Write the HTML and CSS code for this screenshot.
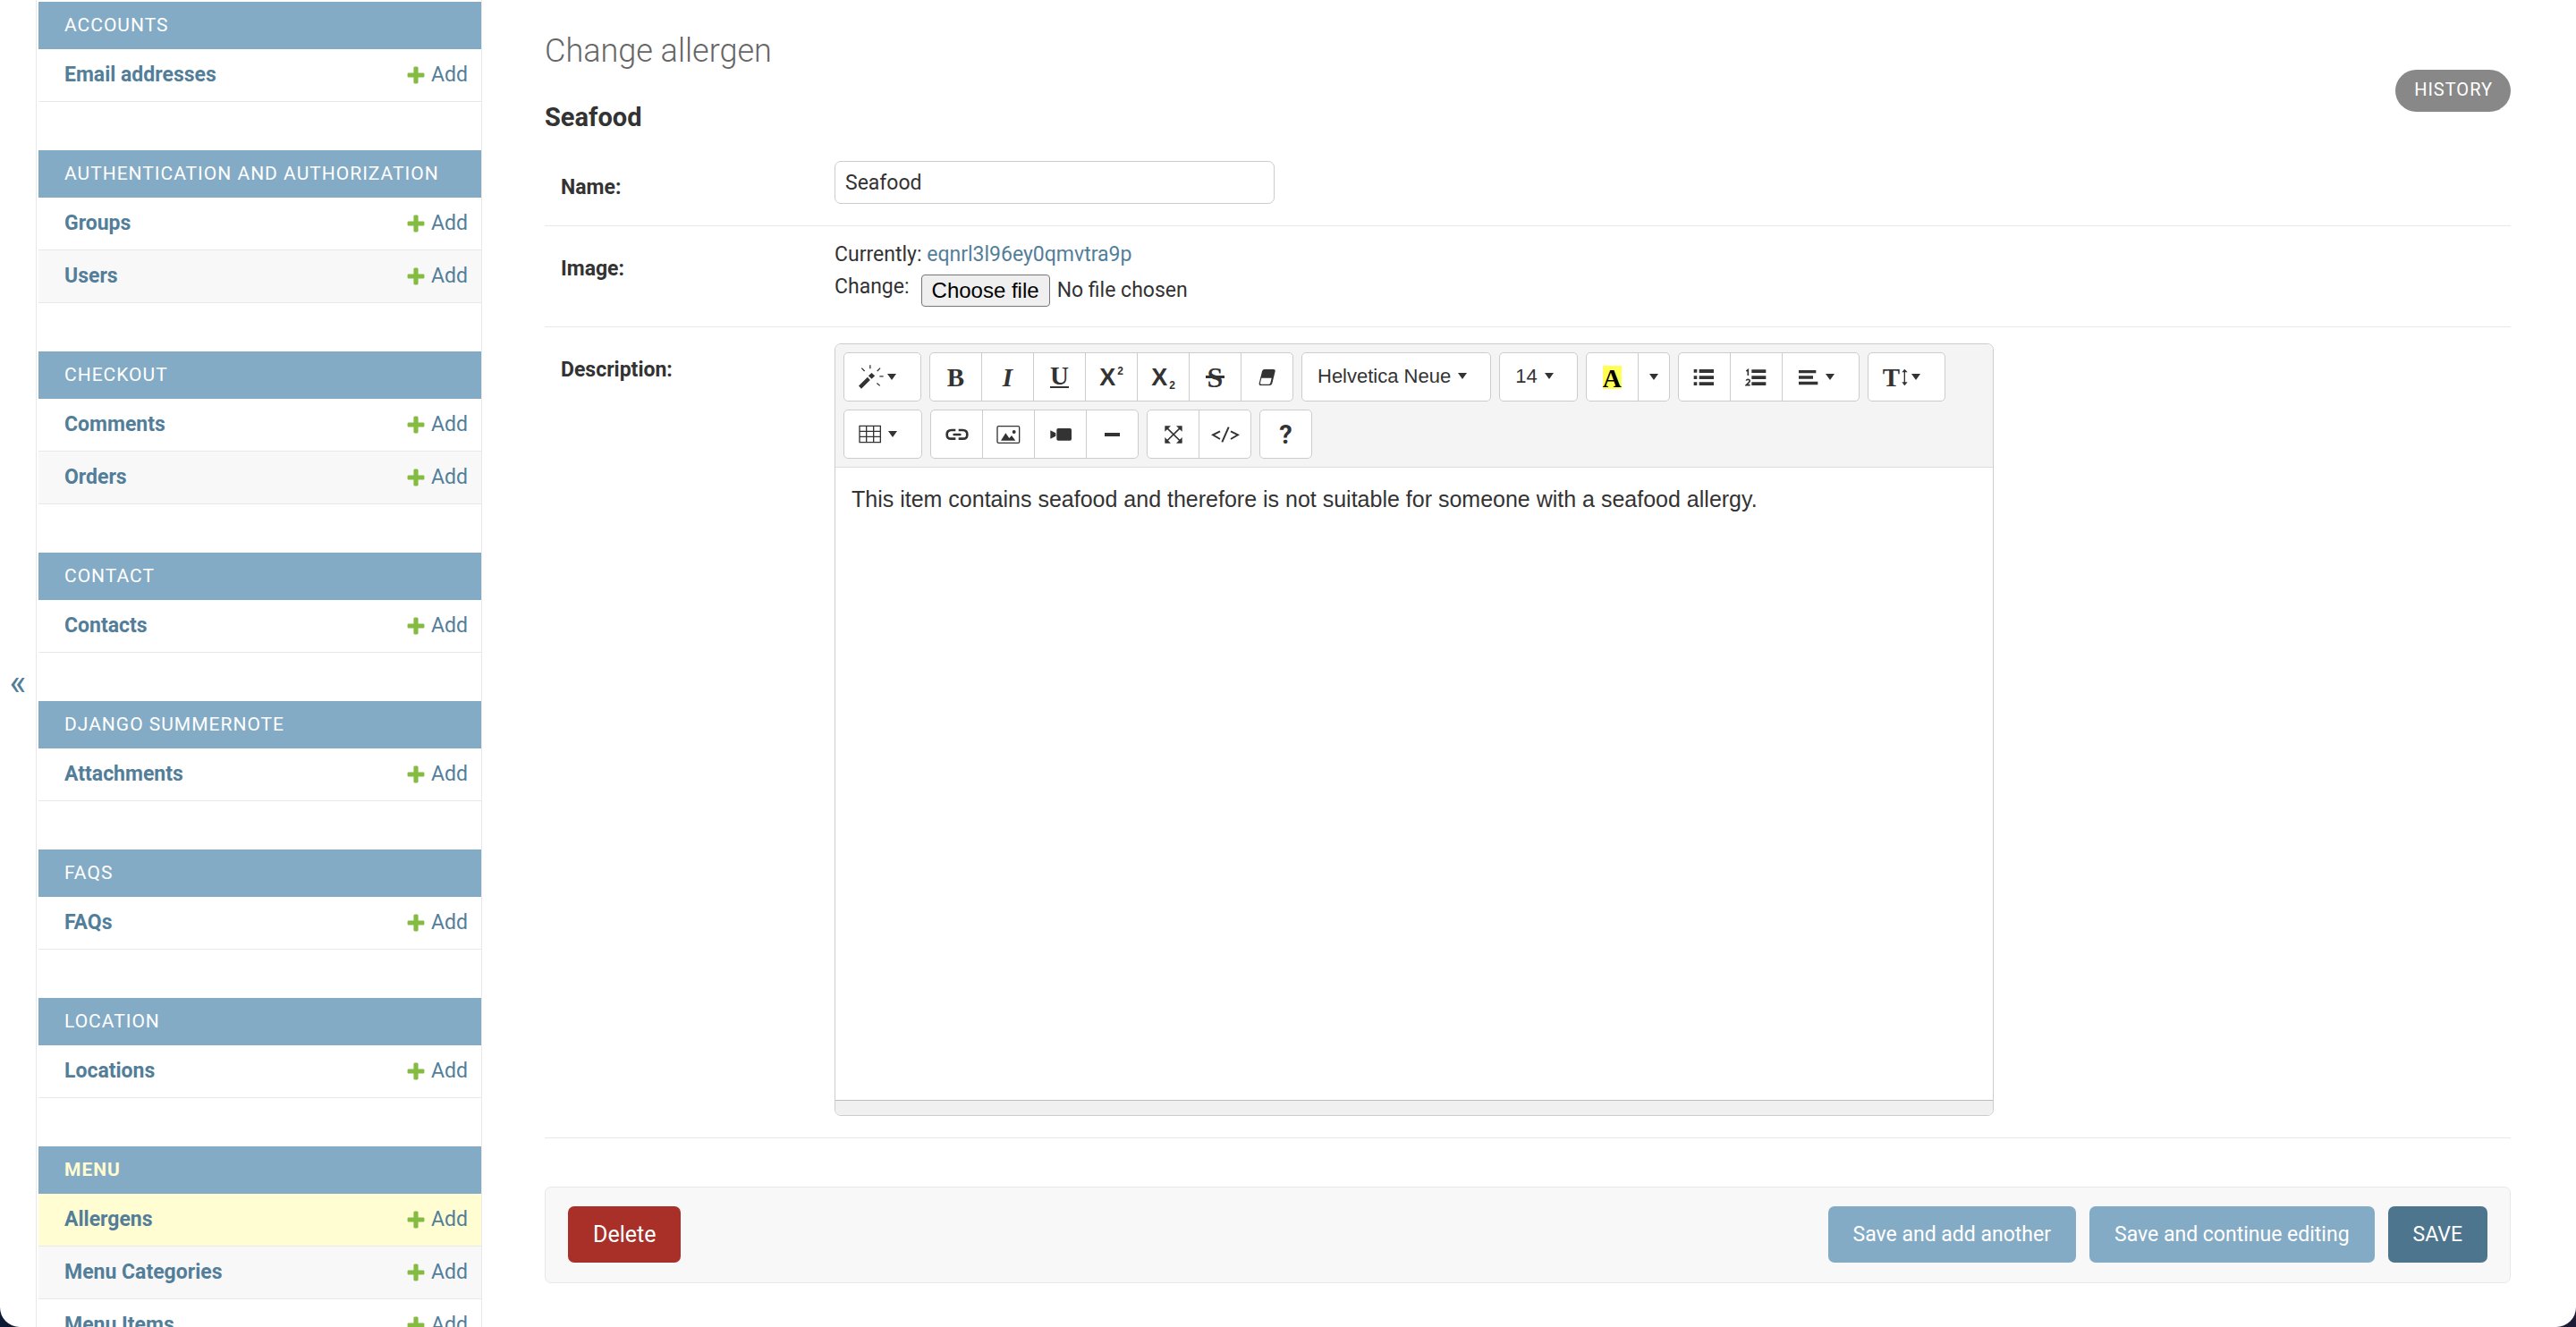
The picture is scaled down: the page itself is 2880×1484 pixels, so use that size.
FILE: index.html
```html
<!DOCTYPE html>
<html lang="en">
<head>
<meta charset="utf-8">
<meta name="viewport" content="width=device-width, initial-scale=1">
<title>Change allergen | Django site admin</title>
<link rel="stylesheet" href="styles.css">
</head>
<body>
<svg class="sprite" aria-hidden="true">
  <symbol id="plus" viewBox="0 0 1792 1792"><path d="M1600 796v192q0 40-28 68t-68 28h-416v416q0 40-28 68t-68 28h-192q-40 0-68-28t-28-68v-416h-416q-40 0-68-28t-28-68v-192q0-40 28-68t68-28h416v-416q0-40 28-68t68-28h192q40 0 68 28t28 68v416h416q40 0 68 28t28 68z"/></symbol>
  <symbol id="caret" viewBox="0 0 30 21"><path d="M0 0h30L15 21z"/></symbol>
</svg>
<div class="shell">
  <button class="toggle" type="button" aria-label="Toggle navigation">«</button>

  <nav class="sidebar" aria-label="Sidebar">
    <table class="app">
      <caption><a href="#">Accounts</a></caption>
      <tr><th scope="row"><a href="#">Email addresses</a></th><td><a class="add" href="#"><svg><use href="#plus"/></svg>Add</a></td></tr>
    </table>
    <table class="app">
      <caption><a href="#">Authentication and Authorization</a></caption>
      <tr><th scope="row"><a href="#">Groups</a></th><td><a class="add" href="#"><svg><use href="#plus"/></svg>Add</a></td></tr>
      <tr><th scope="row"><a href="#">Users</a></th><td><a class="add" href="#"><svg><use href="#plus"/></svg>Add</a></td></tr>
    </table>
    <table class="app">
      <caption><a href="#">Checkout</a></caption>
      <tr><th scope="row"><a href="#">Comments</a></th><td><a class="add" href="#"><svg><use href="#plus"/></svg>Add</a></td></tr>
      <tr><th scope="row"><a href="#">Orders</a></th><td><a class="add" href="#"><svg><use href="#plus"/></svg>Add</a></td></tr>
    </table>
    <table class="app">
      <caption><a href="#">Contact</a></caption>
      <tr><th scope="row"><a href="#">Contacts</a></th><td><a class="add" href="#"><svg><use href="#plus"/></svg>Add</a></td></tr>
    </table>
    <table class="app">
      <caption><a href="#">Django Summernote</a></caption>
      <tr><th scope="row"><a href="#">Attachments</a></th><td><a class="add" href="#"><svg><use href="#plus"/></svg>Add</a></td></tr>
    </table>
    <table class="app">
      <caption><a href="#">FAQs</a></caption>
      <tr><th scope="row"><a href="#">FAQs</a></th><td><a class="add" href="#"><svg><use href="#plus"/></svg>Add</a></td></tr>
    </table>
    <table class="app">
      <caption><a href="#">Location</a></caption>
      <tr><th scope="row"><a href="#">Locations</a></th><td><a class="add" href="#"><svg><use href="#plus"/></svg>Add</a></td></tr>
    </table>
    <table class="app app--current">
      <caption><a href="#">Menu</a></caption>
      <tr class="current"><th scope="row"><a href="#">Allergens</a></th><td><a class="add" href="#"><svg><use href="#plus"/></svg>Add</a></td></tr>
      <tr><th scope="row"><a href="#">Menu Categories</a></th><td><a class="add" href="#"><svg><use href="#plus"/></svg>Add</a></td></tr>
      <tr><th scope="row"><a href="#">Menu Items</a></th><td><a class="add" href="#"><svg><use href="#plus"/></svg>Add</a></td></tr>
    </table>
  </nav>

  <main class="content">
    <header class="heading">
      <div>
        <h1>Change allergen</h1>
        <h2>Seafood</h2>
      </div>
      <a class="history" href="#">History</a>
    </header>

    <form>
      <div class="row">
        <label class="row-label" for="name">Name:</label>
        <div><input class="text-input" id="name" type="text" value="Seafood"></div>
      </div>

      <div class="row">
        <label class="row-label" for="image">Image:</label>
        <div class="upload">
          <p>Currently: <a href="#">eqnrl3l96ey0qmvtra9p</a></p>
          <div class="upload-change">
            <span>Change:</span>
            <input class="file-input" id="image" type="file">
            <label class="file-button" for="image">Choose file</label>
            <span class="file-name">No file chosen</span>
          </div>
        </div>
      </div>

      <div class="row">
        <span class="row-label" id="description-label">Description:</span>
        <div>
        <div class="editor">
          <div class="toolbar" role="toolbar" aria-label="Formatting">
            <div class="group">
              <button class="tool tool--menu gap-s" type="button" aria-label="Style">
                <svg width="28" height="27" viewBox="71 65 85 82"><path d="M71 136l30-29 9 10-30 29zM104 102l11-10 11 10-11 11z"/><path class="line" stroke-width="4" d="M110 66v12M81 76l10 10M144 76l-10 10M142 104h13M133 127l10 9"/></svg>
                <svg class="caret"><use href="#caret"/></svg>
              </button>
            </div>
            <div class="group">
              <button class="tool glyph" type="button" aria-label="Bold"><b>B</b></button>
              <button class="tool glyph" type="button" aria-label="Italic"><i>I</i></button>
              <button class="tool glyph glyph--u" type="button" aria-label="Underline"><span>U</span></button>
              <button class="tool glyph glyph--x" type="button" aria-label="Superscript">X<sup>2</sup></button>
              <button class="tool glyph glyph--x" type="button" aria-label="Subscript">X<sub>2</sub></button>
              <button class="tool glyph" type="button" aria-label="Strikethrough"><s>S</s></button>
              <button class="tool" type="button" aria-label="Remove font style">
                <svg width="20" height="20" viewBox="1410 81 60 60"><path d="M1430 84h30q7 0 6 7l-10 40q-2 7-9 7h-29q-7 0-6-7l10-40q2-7 8-7zM1420 113l-4 17q-1 4 3 4h26q4 0 5-4l4-17z" fill-rule="evenodd"/></svg>
              </button>
            </div>
            <div class="group">
              <button class="tool tool--menu tool--text" type="button">Helvetica Neue <svg class="caret"><use href="#caret"/></svg></button>
            </div>
            <div class="group">
              <button class="tool tool--menu tool--text" type="button">14 <svg class="caret"><use href="#caret"/></svg></button>
            </div>
            <div class="group">
              <button class="tool glyph" type="button" aria-label="Recent color"><span class="swatch">A</span></button>
              <button class="tool tool--drop" type="button" aria-label="More color"><svg class="caret"><use href="#caret"/></svg></button>
            </div>
            <div class="group">
              <button class="tool" type="button" aria-label="Unordered list">
                <svg width="24" height="20" viewBox="373 78 72 60"><path d="M375 81h11v11h-11zM375 103h11v11h-11zM375 124h11v11h-11zM393 81h49v12h-49zM393 103h49v11h-49zM393 124h49v11h-49z"/></svg>
              </button>
              <button class="tool" type="button" aria-label="Ordered list">
                <svg width="24" height="20" viewBox="546 78 72 60"><path d="M568 82h48v11h-48zM568 103h48v11h-48zM568 124h48v11h-48z"/><path class="line" stroke-width="5" d="M550 87l6-4v19M550 119q2-5 7-4 6 1 4 7-2 3-11 12h13"/></svg>
              </button>
              <button class="tool tool--menu tool--wide" type="button" aria-label="Paragraph">
                <svg width="22" height="18" viewBox="725 81 66 54"><path d="M725 84h58v10h-58zM725 103h48v10h-48zM725 122h64v11h-64z"/></svg>
                <svg class="caret"><use href="#caret"/></svg>
              </button>
            </div>
            <div class="group">
              <button class="tool tool--menu gap-s glyph" type="button" aria-label="Line height">
                <span class="height-icon">T<svg width="7" height="20" viewBox="1067 82 21 58"><path class="line" stroke-width="4" d="M1077 86v50"/><path d="M1068 94l9-11 10 11zM1068 127l9 12 10-12z"/></svg></span>
                <svg class="caret"><use href="#caret"/></svg>
              </button>
            </div>
            <div class="group">
              <button class="tool tool--menu" type="button" aria-label="Table">
                <svg width="25" height="21" viewBox="72 269 75 63"><path class="line" stroke-width="4" d="M75 273h70v55H75zM98 273v55M122 273v55M75 291h70M75 309h70"/></svg>
                <svg class="caret"><use href="#caret"/></svg>
              </button>
            </div>
            <div class="group">
              <button class="tool" type="button" aria-label="Link">
                <svg width="26" height="14" viewBox="360 280 78 42"><path class="line" stroke-width="8" d="M394 286h-14q-15 0-15 15t15 14h14M404 286h14q15 0 15 15t-15 14h-14"/><path class="line" stroke-width="8" stroke-linecap="round" d="M389 301h20"/></svg>
              </button>
              <button class="tool" type="button" aria-label="Picture">
                <svg width="27" height="20" viewBox="533 270 81 60"><rect class="line" stroke-width="4" x="536" y="272" width="74" height="56" rx="4"/><circle cx="592" cy="291" r="6"/><path d="M548 320l16-25 12 17 8-9 13 17z"/></svg>
              </button>
              <button class="tool" type="button" aria-label="Video">
                <svg width="24" height="14" viewBox="707 280 72 42"><rect x="729" y="280" width="50" height="41" rx="5"/><path d="M708 287l18 9v10l-18 9z"/></svg>
              </button>
              <button class="tool" type="button" aria-label="Insert horizontal rule">
                <svg width="17" height="4" viewBox="0 0 17 4"><path d="M0 0h17v4H0z"/></svg>
              </button>
            </div>
            <div class="group">
              <button class="tool" type="button" aria-label="Full screen">
                <svg width="20" height="20" viewBox="1095 271 60 60"><path class="line" stroke-width="5" d="M1103 279l44 43M1147 279l-44 43"/><path d="M1096 272h20l-20 19zM1154 272h-20l20 19zM1096 330h20l-20-20zM1154 330h-20l20-20z"/></svg>
              </button>
              <button class="tool" type="button" aria-label="Code view">
                <svg width="32" height="18" viewBox="1250 274 96 54"><path class="line" stroke-width="6" d="M1280 290l-24 12 24 14M1316 290l24 12-24 14M1309 276l-22 50"/></svg>
              </button>
            </div>
            <div class="group">
              <button class="tool help" type="button" aria-label="Help">?</button>
            </div>
          </div>
          <div class="editable" contenteditable="true" role="textbox" aria-multiline="true" aria-labelledby="description-label" spellcheck="false"><p>This item contains seafood and therefore is not suitable for someone with a seafood allergy.</p></div>
          <div class="statusbar"></div>
        </div>
        </div>
      </div>

      <div class="submit-row">
        <a class="action action--delete" href="#">Delete</a>
        <button class="action" type="submit">Save and add another</button>
        <button class="action" type="submit">Save and continue editing</button>
        <button class="action action--save" type="submit">SAVE</button>
      </div>
    </form>
  </main>
</div>
</body>
</html>
```
FILE: styles.css
```css
:root {
  --primary: #84abc5;
  --link: #527e9a;
  --text: #333;
  --hairline: #e8e8e8;
  --border: #ccc;
  --subtle: #f8f8f8;
  --highlight: #fffdd1;
}

* { box-sizing: border-box; }

body {
  margin: 0;
  background: linear-gradient(90deg, #0c1b33, #1d1b35);
  color: var(--text);
  font: 23px/28px Roboto, "Liberation Sans", sans-serif;
}

a { color: var(--link); text-decoration: none; }
h1, h2, p { margin: 0; }
button, input { font: inherit; color: inherit; }
button { cursor: pointer; }
.sprite { display: none; }

.shell {
  display: flex;
  height: 100vh;
  overflow: hidden;
  background: #fff;
  border-radius: 0 0 22px 22px;
}

/* Navigation */
.toggle {
  flex: none;
  width: 41px;
  padding: 44px 0 0;
  border: 0;
  border-right: 1px solid var(--hairline);
  background: none;
  color: var(--link);
  font-size: 40px;
}

.sidebar {
  flex: none;
  width: 498px;
  padding: 2px 0 0 2px;
  border-right: 1px solid var(--hairline);
}

.app {
  width: 100%;
  margin-bottom: 54px;
  border-spacing: 0;
}

.app caption {
  padding: 12px 15px 13px 29px;
  background: var(--primary);
  font-size: 21px;
  letter-spacing: 1px;
  text-align: left;
  text-transform: uppercase;
}

.app caption a { color: #fff; }
.app--current caption a { color: var(--highlight); font-weight: 700; }

.app th, .app td {
  height: 59px;
  padding: 0 15px 0 29px;
  border-bottom: 1px solid var(--hairline);
  text-align: left;
}

.app td { padding-left: 0; }
.app tr:nth-child(even) { background: var(--subtle); }
.app tr.current { background: var(--highlight); }

.add { display: flex; align-items: center; justify-content: flex-end; gap: 5px; }
.add svg { width: 24px; height: 24px; fill: #84bb41; }

/* Page heading */
.content { flex: 1; min-width: 0; padding: 36px 73px 48px 70px; }

.heading { display: flex; justify-content: space-between; align-items: flex-end; margin-bottom: 13px; }
.heading h1 { margin-bottom: 35px; color: #666; font-size: 36px; font-weight: 300; line-height: 43px; }
.heading h2 { font-size: 29px; font-weight: 700; line-height: 35px; }

.history {
  margin-bottom: 24px;
  padding: 8px 20px 11px 21px;
  border-radius: 24px;
  background: #888;
  color: #fff;
  font-size: 20px;
  letter-spacing: 1px;
  text-transform: uppercase;
}

/* Form rows */
.row {
  display: grid;
  grid-template-columns: 306px 1fr;
  padding: 18px 0 22px 18px;
  border-bottom: 1px solid var(--hairline);
}

.row-label { padding-top: 16px; font-weight: 700; }

.text-input {
  display: block;
  width: 492px;
  height: 48px;
  margin-bottom: 2px;
  padding: 0 11px;
  border: 1px solid var(--border);
  border-radius: 7px;
  background: #fff;
}

.upload { display: grid; gap: 8px; }
.upload-change { position: relative; display: flex; align-items: flex-start; }

.file-input { position: absolute; width: 1px; height: 1px; opacity: 0; }

.file-button {
  margin-left: 13px;
  padding: 3px 11px;
  border: 1px solid #767676;
  border-radius: 4px;
  background: #efefef;
  color: #000;
  font-family: "Liberation Sans", Arial, sans-serif;
  font-size: 24px;
}

.file-name { padding: 4px 8px; }

/* Rich text editor */
.editor {
  max-width: 1296px;
  margin-bottom: 2px;
  border: 1px solid var(--border);
  border-radius: 7px;
  overflow: hidden;
}

.toolbar {
  display: flex;
  flex-wrap: wrap;
  gap: 9px;
  padding: 9px;
  border-bottom: 1px solid #ddd;
  background: #f4f4f4;
}

.group { display: flex; }

.tool {
  display: flex;
  align-items: center;
  justify-content: center;
  width: 59px;
  height: 55px;
  padding: 0;
  border: 1px solid var(--border);
  background: #fff;
}

.tool + .tool { margin-left: -1px; }
.tool:first-child { border-radius: 5px 0 0 5px; }
.tool:last-child { border-radius: 0 5px 5px 0; }
.tool:only-child { border-radius: 5px; }

.tool svg { flex: none; fill: var(--text); }
.tool .line { fill: none; stroke: var(--text); }
.tool .caret { width: 10px; height: 7px; }

.tool--menu { width: auto; gap: 8px; padding: 0 27px 0 16px; }
.tool--wide { padding-left: 18px; }
.gap-s { gap: 4px; }
.tool--text { padding: 0 26px 2px 17px; font-family: "Liberation Sans", Arial, sans-serif; font-size: 22px; }
.tool--drop { width: 36px; }

.glyph { font-family: "Liberation Serif", "Times New Roman", serif; font-size: 29px; font-weight: 700; }
.glyph--u span { border-bottom: 2px solid; line-height: 23px; }
.glyph--x { font-family: "Liberation Sans", Arial, sans-serif; font-size: 27px; }
.glyph sup, .glyph sub { margin-left: 2px; font-size: 12px; line-height: 12px; }
.glyph sup { align-self: flex-start; margin-top: 14px; }
.glyph sub { align-self: flex-end; margin-bottom: 11px; }
.glyph s {
  padding: 0 2px;
  background: linear-gradient(currentColor, currentColor) center / 100% 3px no-repeat;
  font-size: 32px;
  text-decoration: none;
}
.swatch { height: 26px; background: #ff5; color: #000; line-height: 28px; }
.height-icon { display: flex; align-items: center; gap: 2px; }
.help { font-size: 29px; font-weight: 700; }

.editable {
  min-height: 707px;
  padding: 18px;
  font: 25px/34px "Liberation Sans", Arial, sans-serif;
}

.statusbar { height: 17px; border-top: 1px solid #bbb; background: #f0f0f0; }

/* Submit bar */
.submit-row {
  display: flex;
  gap: 15px;
  margin-top: 54px;
  padding: 21px 25px 22px;
  border: 1px solid var(--hairline);
  border-radius: 7px;
  background: var(--subtle);
}

.action {
  padding: 0 28px;
  border: 0;
  border-radius: 7px;
  background: var(--primary);
  color: #fff;
  line-height: 63px;
}

.action--delete { margin-right: auto; background: #a92f29; font-size: 25px; }
.action--save { background: #4e758e; }
```
